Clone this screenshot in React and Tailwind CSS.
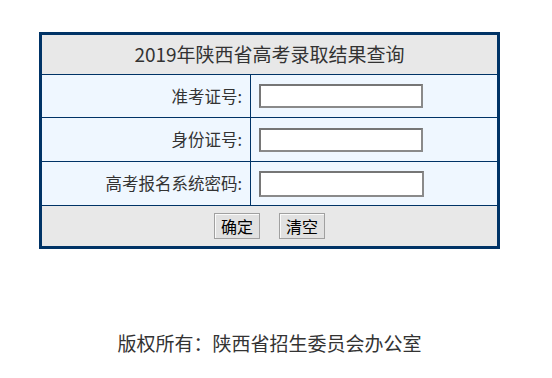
import React from "react";

const font = { fontFamily: '"Microsoft YaHei", "Noto Sans CJK SC", sans-serif' };

const Row = ({ label, h, wide }) => (
  <div className={`grid grid-cols-[209px_1fr] border-t border-[#003366] bg-[#eff7ff] ${h}`}>
    <div className="flex items-center justify-end border-r border-[#003366] pr-[8px] text-[16.5px] text-[#333]">
      {label}
    </div>
    <div className="flex items-center pl-[8px]">
      <input
        type="text"
        className={`${wide ? "w-[165px] h-[26px]" : "w-[164px] h-[24px]"} border-2 border-t-[#767676] border-l-[#767676] border-r-[#8a8a8a] border-b-[#8a8a8a] bg-white outline-none`}
      />
    </div>
  </div>
);

export default function App() {
  return (
    <div className="w-[539px] flex flex-col items-center bg-white" style={font}>
      <div className="mt-[32px] w-[461px] border-[3px] border-[#003366]">
        <div className="flex h-[39px] items-center justify-center bg-[#e8e8e8] text-[19px] text-[#333]">
          2019年陕西省高考录取结果查询
        </div>
        <Row label="准考证号:" h="h-[43px]" />
        <Row label="身份证号:" h="h-[44px]" />
        <Row label="高考报名系统密码:" h="h-[44px]" wide />
        <div className="flex h-[41px] items-center justify-center gap-[19px] border-t border-[#003366] bg-[#e8e8e8]">
          <button className="h-[26px] w-[46px] border border-[#a0a0a0] bg-[#e1e1e1] text-[16px] leading-none text-black shadow-[inset_1px_1px_0_#fafafa]">
            确定
          </button>
          <button className="h-[26px] w-[46px] border border-[#a0a0a0] bg-[#e1e1e1] text-[16px] leading-none text-black shadow-[inset_1px_1px_0_#fafafa]">
            清空
          </button>
        </div>
      </div>
      <div className="mt-[82px] text-[19px] leading-[24px] text-[#333]">
        版权所有：陕西省招生委员会办公室
      </div>
    </div>
  );
}
